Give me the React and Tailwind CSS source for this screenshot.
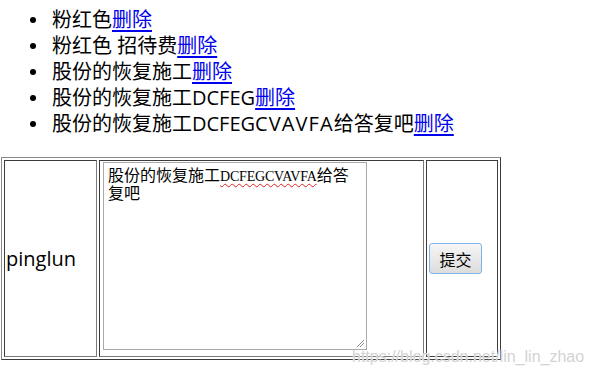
import React from "react";

const items = [
  [["粉红色", ""]],
  [["粉红色 招待费", ""]],
  [["股份的恢复施工", ""]],
  [["股份的恢复施工DCFEG", ""]],
  [
    ["股份的恢复施工DCFEG", ""],
    ["CVAVFA", "tracking-[1.1px]"],
    ["给答复吧", ""],
  ],
];

export default function App() {
  return (
    <div
      className="relative w-[592px] h-[375px] bg-white text-black overflow-hidden"
      style={{ fontFamily: '"Open Sans", "Noto Sans CJK SC", sans-serif' }}
    >
      <ul className="m-0 pt-[7px] pb-0 pl-0 mb-[20px] list-none">
        {items.map((parts, i) => (
          <li key={i} className="flex items-center h-[26px] text-[20px] leading-[26px]">
            <span className="w-[52px] shrink-0 flex items-center">
              <span className="ml-[30px] w-[6px] h-[6px] rounded-full bg-black" />
            </span>
            {parts.map(([t, c], j) => (
              <span key={j} className={"whitespace-pre " + c}>
                {t}
              </span>
            ))}
            <a href="#" className="text-[#0000ee] underline underline-offset-[3px]">
              删除
            </a>
          </li>
        ))}
      </ul>

      <table className="ml-[1px] border-separate border-spacing-[2px] border border-t-[#8a8a8a] border-l-[#8a8a8a] border-r-[#3c3c3c] border-b-[#3c3c3c]">
        <tbody>
          <tr>
            <td className="w-[93px] h-[197px] p-[1px] border border-t-[#3c3c3c] border-l-[#3c3c3c] border-r-[#7a7a7a] border-b-[#7a7a7a] align-middle text-[20px] leading-[26px]">
              pinglun
            </td>
            <td className="w-[325px] h-[197px] p-[1px] border border-t-[#3c3c3c] border-l-[#3c3c3c] border-r-[#7a7a7a] border-b-[#7a7a7a] align-top">
              <div className="relative ml-[2px] w-[264px] h-[188px] border border-[#a9a9a9] pt-[2px] pl-[4px] text-[16px] leading-[18px] bg-white">
                <div className="h-[18px] whitespace-nowrap">
                  <span style={{ fontFamily: '"Noto Sans CJK SC", sans-serif' }}>股份的恢复施工</span>
                  <span
                    className="text-[14px] tracking-[-0.2px] underline decoration-wavy decoration-[#e02020] decoration-[1px] underline-offset-[2px]"
                    style={{ fontFamily: '"Liberation Serif", serif' }}
                  >
                    DCFEGCVAVFA
                  </span>
                  <span style={{ fontFamily: '"Noto Sans CJK SC", sans-serif' }}>给答</span>
                </div>
                <div className="h-[18px] whitespace-nowrap">
                  <span style={{ fontFamily: '"Noto Sans CJK SC", sans-serif' }}>复吧</span>
                </div>
                <svg
                  className="absolute right-[1px] bottom-[1px]"
                  width="10"
                  height="10"
                  viewBox="0 0 10 10"
                >
                  <line x1="2" y1="9" x2="9" y2="2" stroke="#8a8a8a" strokeWidth="1" />
                  <line x1="5" y1="9" x2="9" y2="5" stroke="#8a8a8a" strokeWidth="1" />
                </svg>
              </div>
            </td>
            <td className="w-[72px] h-[197px] p-[1px] border border-[#3c3c3c] align-middle">
              <button
                type="button"
                className="ml-[1px] w-[53px] h-[31px] rounded-[3px] border border-[#7eb4ea] bg-gradient-to-b from-[#f6f6f6] to-[#dcdcdc] text-[16px] leading-[20px] text-black"
                style={{ fontFamily: '"Noto Sans CJK SC", sans-serif' }}
              >
                提交
              </button>
            </td>
          </tr>
        </tbody>
      </table>

      <div
        className="absolute left-[352px] top-[348px] text-[16px] leading-[18px] text-[#d3d3d3] whitespace-nowrap"
        style={{
          fontFamily: '"Liberation Sans", Arial, sans-serif',
          textShadow: "0 0 1px rgba(255,255,255,0.9)",
        }}
      >
        https://blog.csdn.net/lin_lin_zhao
      </div>
    </div>
  );
}
